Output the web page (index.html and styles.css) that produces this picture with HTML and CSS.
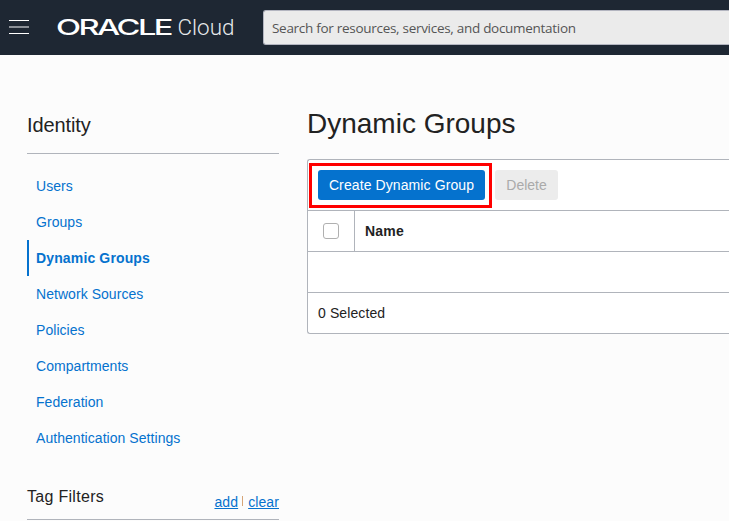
FILE: index.html
```html
<!DOCTYPE html>
<html lang="en">
<head>
<meta charset="utf-8">
<title>Dynamic Groups</title>
<link rel="stylesheet" href="styles.css">
</head>
<body>
<header class="topbar">
  <button class="menu" aria-label="Menu"><span></span><span></span><span></span></button>
  <svg class="logo" width="180" height="24" viewBox="0 0 180 24">
    <text class="logo-brand" x="-1" y="20" textLength="115" lengthAdjust="spacingAndGlyphs">ORACLE</text>
    <text class="logo-product" x="120.5" y="20" textLength="57" lengthAdjust="spacingAndGlyphs">Cloud</text>
  </svg>
  <div class="search">Search for resources, services, and documentation</div>
</header>
<div class="page">
  <aside class="sidebar">
    <h2 class="side-title">Identity</h2>
    <nav class="nav">
      <a class="nav-item">Users</a>
      <a class="nav-item">Groups</a>
      <a class="nav-item active">Dynamic Groups</a>
      <a class="nav-item">Network Sources</a>
      <a class="nav-item">Policies</a>
      <a class="nav-item">Compartments</a>
      <a class="nav-item">Federation</a>
      <a class="nav-item">Authentication Settings</a>
    </nav>
    <div class="filters">
      <h3 class="filters-title">Tag Filters</h3>
      <div class="filters-actions"><a>add</a><span class="divider"></span><a>clear</a></div>
    </div>
  </aside>
  <main class="content">
    <h1 class="title">Dynamic Groups</h1>
    <section class="panel">
      <div class="toolbar">
        <div class="create"><button class="btn primary">Create Dynamic Group</button></div>
        <button class="btn disabled">Delete</button>
      </div>
      <div class="row head">
        <div class="check"><span class="box"></span></div>
        <div class="name">Name</div>
      </div>
      <div class="row"></div>
      <div class="row foot">0 Selected</div>
    </section>
  </main>
</div>
</body>
</html>
```
FILE: styles.css
```css
* { box-sizing: border-box; }
body {
  margin: 0;
  height: 521px;
  overflow: hidden;
  background: #fcfcfc;
  color: #222;
  font: 14px/20px "Liberation Sans", Arial, sans-serif;
}
h1, h2, h3 { margin: 0; font-weight: 400; }
button { border: 0; padding: 0; font: inherit; letter-spacing: inherit; }

.topbar {
  display: flex;
  height: 55px;
  background: #1e2733;
}
.menu {
  display: flex;
  flex-direction: column;
  justify-content: space-between;
  flex: none;
  width: 20px;
  height: 14px;
  margin: 20px 0 0 9px;
  background: none;
}
.menu span { height: 1px; background: #fff; }
.menu span:nth-child(2) { height: 2px; background: #8b9097; }
.logo { flex: none; margin: 15px 0 0 28px; fill: #fff; overflow: visible; }
.logo-brand { font: 500 20.8px Inter, sans-serif; letter-spacing: -1.6px; }
.logo-product { font: 300 22.5px Roboto, sans-serif; fill: #e8eaec; }
.search {
  flex: 1;
  min-width: 0;
  height: 35px;
  margin: 10px 0 0 26px;
  padding-left: 8px;
  border: 1px solid #b3b5c0;
  border-right: 0;
  border-radius: 3px 0 0 3px;
  background: #ebebeb;
  color: #555;
  font: 13.5px/34px "Open Sans", sans-serif;
  letter-spacing: -0.29px;
  white-space: nowrap;
}

.page { display: flex; }
.sidebar { flex: none; width: 252px; margin: 58px 28px 0 27px; }
.side-title {
  height: 41px;
  border-bottom: 1px solid #b0b4bb;
  font-size: 20px;
  letter-spacing: -0.1px;
  line-height: 24px;
}
.nav { display: flex; flex-direction: column; margin-top: 14px; }
.nav-item {
  height: 36px;
  padding-left: 7px;
  border-left: 2px solid transparent;
  color: #0572ce;
  letter-spacing: 0.05px;
  line-height: 36px;
}
.nav-item.active { border-left-color: #0572ce; font-weight: 700; letter-spacing: 0.14px; }
.filters {
  display: flex;
  justify-content: space-between;
  height: 36px;
  margin-top: 28px;
  border-bottom: 1px solid #b0b4bb;
}
.filters-title { padding-top: 1px; font-size: 16px; letter-spacing: 0.3px; line-height: 24px; }
.filters-actions { display: flex; padding-top: 8px; color: #0572ce; letter-spacing: 0.1px; }
.filters-actions a { text-decoration: underline; }
.divider { width: 1px; height: 10px; margin: 4px 5px 0 4px; background: #d7a577; }

.content { flex: 1; min-width: 0; padding-top: 52px; }
.title { height: 52px; font-size: 28px; line-height: 34px; }
.panel {
  border: 1px solid #b0b4bb;
  border-right: 0;
  border-radius: 3px 0 0 3px;
  background: #fff;
}
.toolbar { display: flex; height: 50px; padding: 3px 0 0 1px; }
.create { width: 183px; height: 45px; padding: 4px 5px 5px 6px; border: 3px solid #f00; }
.btn { height: 30px; border-radius: 3px; line-height: 30px; }
.create .btn { width: 167px; }
.primary { background: #0572ce; color: #fff; letter-spacing: 0.1px; }
.disabled { width: 63px; margin: 7px 0 0 3px; background: #ececec; color: #aaa; }
.row { display: flex; height: 41px; border-top: 1px solid #b0b4bb; line-height: 40px; }
.check {
  display: flex;
  align-items: center;
  justify-content: center;
  width: 47px;
  border-right: 1px solid #b0b4bb;
}
.box { width: 16px; height: 16px; border: 1px solid #b0b0b0; border-radius: 3px; }
.name { padding-left: 10px; font-weight: 700; letter-spacing: 0.2px; }
.foot { padding-left: 10px; letter-spacing: 0.1px; }
```
